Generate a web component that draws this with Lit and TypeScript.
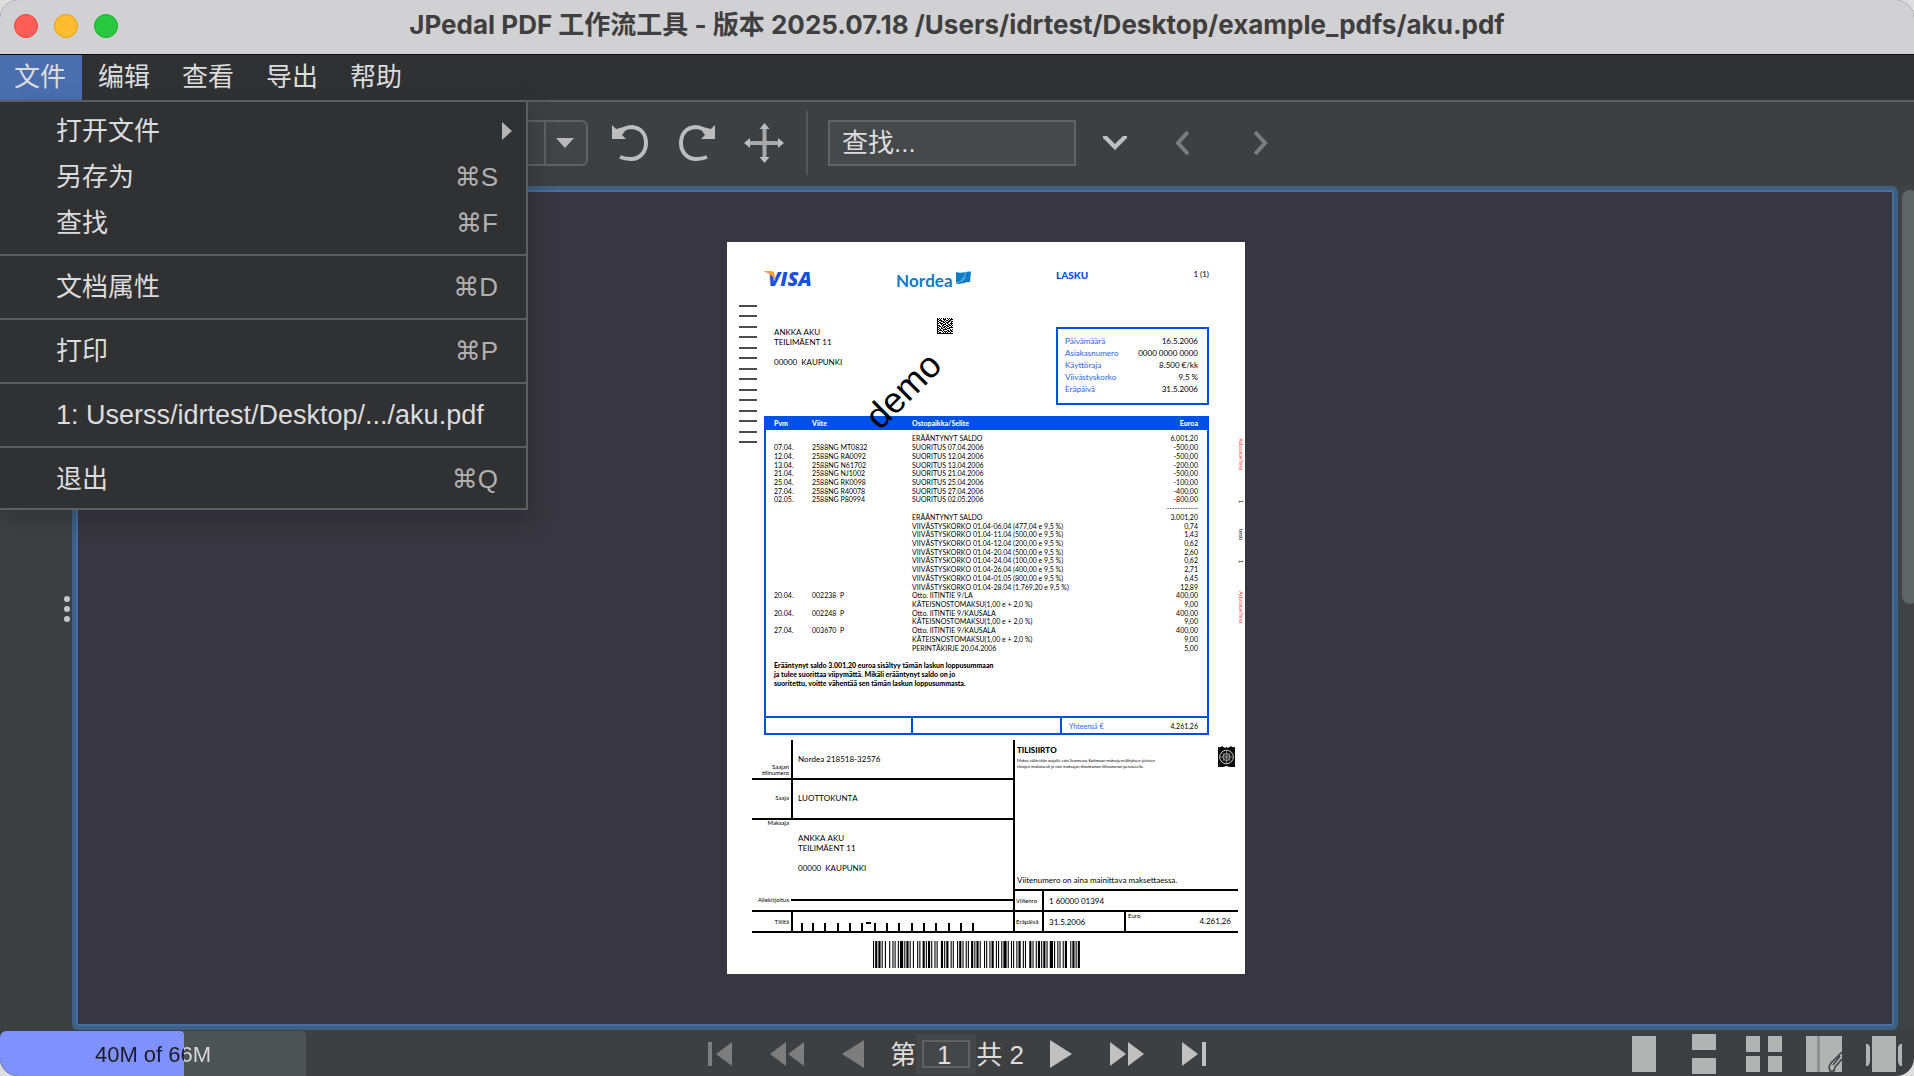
import { LitElement, html, svg, css } from "lit";
import { customElement } from "lit/decorators.js";

type Entry = { label: string; key?: string; sub?: boolean; path?: boolean };

const MENUS = ["文件", "编辑", "查看", "导出", "帮助"];

const FILE_MENU: Entry[][] = [
  [
    { label: "打开文件", sub: true },
    { label: "另存为", key: "⌘S" },
    { label: "查找", key: "⌘F" },
  ],
  [{ label: "文档属性", key: "⌘D" }],
  [{ label: "打印", key: "⌘P" }],
  [{ label: "1: Userss/idrtest/Desktop/.../aku.pdf", path: true }],
  [{ label: "退出", key: "⌘Q" }],
];

const ROWS: string[][] = [
  ["", "", "ERÄÄNTYNYT SALDO", "6.001,20"],
  ["07.04.", "2588NG MT0832", "SUORITUS 07.04.2006", "-500,00"],
  ["12.04.", "2588NG RA0092", "SUORITUS 12.04.2006", "-500,00"],
  ["13.04.", "2588NG N61702", "SUORITUS 13.04.2006", "-200,00"],
  ["21.04.", "2588NG NJ1002", "SUORITUS 21.04.2006", "-500,00"],
  ["25.04.", "2588NG RK0098", "SUORITUS 25.04.2006", "-100,00"],
  ["27.04.", "2588NG R40078", "SUORITUS 27.04.2006", "-400,00"],
  ["02.05.", "2588NG P80994", "SUORITUS 02.05.2006", "-800,00"],
  ["", "", "", "------------"],
  ["", "", "ERÄÄNTYNYT SALDO", "3.001,20"],
  ["", "", "VIIVÄSTYSKORKO 01.04-06.04 (477,04 e 9,5 %)", "0,74"],
  ["", "", "VIIVÄSTYSKORKO 01.04-11.04 (500,00 e 9,5 %)", "1,43"],
  ["", "", "VIIVÄSTYSKORKO 01.04-12.04 (200,00 e 9,5 %)", "0,62"],
  ["", "", "VIIVÄSTYSKORKO 01.04-20.04 (500,00 e 9,5 %)", "2,60"],
  ["", "", "VIIVÄSTYSKORKO 01.04-24.04 (100,00 e 9,5 %)", "0,62"],
  ["", "", "VIIVÄSTYSKORKO 01.04-26.04 (400,00 e 9,5 %)", "2,71"],
  ["", "", "VIIVÄSTYSKORKO 01.04-01.05 (800,00 e 9,5 %)", "6,45"],
  ["", "", "VIIVÄSTYSKORKO 01.04-28.04 (1.769,20 e 9,5 %)", "12,89"],
  ["20.04.", "002238  P", "Otto. IITINTIE 9/LA", "400,00"],
  ["", "", "KÄTEISNOSTOMAKSU(1,00 e + 2,0 %)", "9,00"],
  ["20.04.", "002248  P", "Otto. IITINTIE 9/KAUSALA", "400,00"],
  ["", "", "KÄTEISNOSTOMAKSU(1,00 e + 2,0 %)", "9,00"],
  ["27.04.", "003670  P", "Otto. IITINTIE 9/KAUSALA", "400,00"],
  ["", "", "KÄTEISNOSTOMAKSU(1,00 e + 2,0 %)", "9,00"],
  ["", "", "PERINTÄKIRJE 20.04.2006", "5,00"],
];

const SUMMARY: string[][] = [
  ["Päivämäärä", "16.5.2006"],
  ["Asiakasnumero", "0000 0000 0000"],
  ["Käyttöraja", "8.500 €/kk"],
  ["Viivästyskorko", "9,5 %"],
  ["Eräpäivä", "31.5.2006"],
];

const MATRIX = [
  "1010101010101010", "1101001110010111", "1011100101101100", "1100111010011011",
  "1011001101110010", "1101110010100111", "1000101110011010", "1110011001101101",
  "1011010110110010", "1100101101001111", "1010110010111000", "1101001111000101",
  "1011101000110110", "1100010111011011", "1011001010100100", "1111111111111111",
];

const BARS =
  "1121211213121112113111211213111221112112111321112211131121121112211121131112112211121131121112112211132112112111211231121112112311211121";

/** Bars of the payment barcode; digits give alternating bar and gap widths. */
function barcode() {
  const total = [...BARS].reduce((n, c) => n + Number(c), 0);
  let x = 0;
  const bars = [...BARS].map((c, i) => {
    const w = Number(c);
    const r = i % 2 === 0 ? svg`<rect x=${x} width=${w} y="0" height="27" />` : null;
    x += w;
    return r;
  });
  return html`<svg class="barcode" viewBox="0 0 ${total} 27" preserveAspectRatio="none" aria-hidden="true">${bars}</svg>`;
}

function matrix() {
  return html`<svg class="matrix" viewBox="0 0 16 16" shape-rendering="crispEdges" aria-hidden="true">
    ${MATRIX.map((row, y) =>
      [...row].map((c, x) => (c === "1" ? svg`<rect x=${x} y=${y} width="1" height="1" />` : null))
    )}
  </svg>`;
}

@customElement("pdf-page")
export class PdfPage extends LitElement {
  static styles = css`
    :host {
      display: block;
      position: relative;
      box-sizing: border-box;
      width: 518px;
      padding: 28px 0 6px;
      background: #fff;
      color: #000;
      font: 7px/9px Lato, "Noto Sans", sans-serif;
      font-kerning: none;
    }
    p, h1, h2, dl, dd, dt { margin: 0; font-size: inherit; font-weight: inherit; }
    .overlay { position: absolute; inset: 0; width: 100%; height: 100%; pointer-events: none; }
    .body { margin: 0 36px 0 37px; }
    .head { display: grid; grid-template-columns: 132px 160px 1fr auto; align-items: start; height: 48px; }
    .head svg { display: block; overflow: visible; }
    .lasku { font-size: 10px; line-height: 10px; font-weight: 900; color: #0050e6; }
    .count { font-size: 8px; line-height: 8px; }
    .top { display: grid; grid-template-columns: 173px 119px 1fr; align-items: start; }
    .address { font-size: 8px; line-height: 10px; white-space: pre; }
    .top .address { padding: 9px 0 0 10px; }
    .matrix { width: 16px; height: 16px; }
    .summary {
      display: grid; grid-template-columns: auto auto; margin-top: 9px; padding: 6px 9px 8px 7px;
      border: 2px solid #0050e6; line-height: 12px; height: 60px; font-size: 8px;
    }
    .summary dt { color: #1f62ea; }
    .summary dd { text-align: right; }
    .statement { margin-top: 11px; border: 2px solid #0050e6; border-top: 0; }
    table { width: 100%; height: 236px; border-collapse: collapse; table-layout: fixed; }
    th { background: #0050e6; color: #fff; text-align: left; font-weight: 900; height: 14px; padding: 0; }
    td { padding: 0; white-space: pre; line-height: 8px; vertical-align: middle; }
    .pad td { height: 4px; }
    .c0 { width: 46px; padding-left: 8px; box-sizing: border-box; }
    .c1 { width: 100px; }
    .c3 { width: 60px; text-align: right; padding-right: 9px; box-sizing: border-box; }
    .note { font-weight: 900; padding: 9px 8px 28px; width: 240px; white-space: pre; }
    .total { display: grid; grid-template-columns: 145px 149px 1fr; border-top: 2px solid #0050e6; height: 15px; }
    .total div + div { border-left: 2px solid #0050e6; }
    .sum { display: flex; justify-content: space-between; align-items: center; padding: 2px 9px 0 7px; }
    .sum span:first-child { color: #1f62ea; }
    .slip { display: grid; grid-template-columns: 263px 1fr; margin: 5px 7px 0 25px; }
    .left, .right { display: flex; flex-direction: column; }
    .left { border-right: 2px solid #000; box-sizing: border-box; }
    .line { display: grid; grid-template-columns: 39px 1fr; border-bottom: 2px solid #000; }
    .label { font-size: 6px; line-height: 6px; text-align: right; padding-right: 2px; align-self: center; }
    .value { font-size: 8px; line-height: 10px; display: flex; align-items: center; padding-left: 5px; border-left: 2px solid #000; }
    .r1 { height: 38px; }
    .r1 .label { align-self: end; padding-bottom: 2px; }
    .r2 { height: 38px; }
    .r2 .value, .r2 .label { padding-bottom: 2px; }
    .r3 { height: 90px; border-bottom: 2px solid #000; display: grid; grid-template-rows: 70px 20px; }
    .payer { display: grid; grid-template-columns: 39px 1fr; }
    .payer .label { align-self: start; }
    .payer .address { padding: 13px 0 0 7px; }
    .sign { display: grid; grid-template-columns: 39px 1fr; align-items: center; }
    .sign i { border-top: 2px solid #000; }
    .r4 { height: 19px; }
    .r4 svg { display: block; }
    .r4 .value { padding-left: 0; align-items: end; }
    .info { height: 151px; border-bottom: 2px solid #000; display: flex; flex-direction: column; justify-content: space-between; padding: 5px 0 4px 2px; box-sizing: border-box; }
    .info header { display: flex; justify-content: space-between; padding-right: 3px; }
    .info h2 { font-size: 8px; line-height: 10px; font-weight: 900; }
    .terms { font-size: 4px; line-height: 6px; margin-top: 3px; white-space: pre; }
    .remark { font-size: 8px; line-height: 10px; }
    .cells { display: flex; height: 19px; border-bottom: 2px solid #000; align-items: stretch; }
    .cells .label { width: 27px; text-align: left; padding-left: 1px; box-sizing: border-box; }
    .cells .value { flex: 1; }
    .due .value:nth-child(2) { flex: 0 0 75px; }
    .euro { flex: 1; display: flex; justify-content: space-between; border-left: 2px solid #000; padding: 0 7px 0 2px; }
    .euro span { font-size: 6px; line-height: 6px; padding-top: 1px; }
    .euro b { font-size: 8px; font-weight: 400; align-self: center; }
    .barcode { display: block; width: 208px; height: 27px; margin: 8px 0 0 146px; }
    .side {
      position: absolute; top: 196px; right: 1px; writing-mode: vertical-rl;
      font: 6px/6px "Liberation Sans", Arial, sans-serif;
      display: grid; grid-template-columns: 62px 29px 31px 31px auto;
    }
    .red { color: #f33; }
  `;

  render() {
    return html`
      <svg class="overlay" viewBox="0 0 518 732" aria-hidden="true">
        ${Array.from({ length: 14 }, (_, i) => svg`<path d="M12 ${64 + Math.round(i * 10.46)}h18" stroke="#000" stroke-width="1.4" />`)}
      </svg>
      <div class="body">
        <div class="head">
          <svg width="60" height="20" viewBox="0 0 60 20" role="img" aria-label="Visa">
            <text x="4" y="16" font-family="Open Sans, sans-serif" font-weight="800" font-style="italic" font-size="20" fill="#1a50dc">VISA</text>
            <path d="M0 1h7c2 0 3 1 3.400 3l1.200 7C9 6 5 3 0 1.500z" fill="#f7a428" />
          </svg>
          <svg width="76" height="22" viewBox="0 0 76 22" role="img" aria-label="Nordea">
            <text x="0" y="17" font-family="Lato, sans-serif" font-weight="700" font-size="17" fill="#0f7ac6">Nordea</text>
            <path d="M60 2c6 2 9-1 15-.5L74 12c-5-.5-8 3-14 1.500z" fill="#0f7ac6" />
            <path d="M60 13c5-1 8-5 10-11M65 12l5-5" stroke="#8cc4ea" fill="none" stroke-width=".8" />
          </svg>
          <h1 class="lasku">LASKU</h1>
          <span class="count">1 (1)</span>
        </div>
        <div class="top">
          <p class="address">${"ANKKA AKU\nTEILIMÄENT 11\n\n00000  KAUPUNKI"}</p>
          ${matrix()}
          <dl class="summary">${SUMMARY.map(([k, v]) => html`<dt>${k}</dt><dd>${v}</dd>`)}</dl>
        </div>
        <div class="statement">
          <table>
            <thead>
              <tr><th class="c0">Pvm</th><th class="c1">Viite</th><th>Ostopaikka/Selite</th><th class="c3">Euroa</th></tr>
            </thead>
            <tbody>
              <tr class="pad"><td colspan="4"></td></tr>
              ${ROWS.map((r) => html`<tr>${r.map((c, i) => html`<td class="c${i}">${c}</td>`)}</tr>`)}
            </tbody>
          </table>
          <p class="note">${"Erääntynyt saldo 3.001,20 euroa sisältyy tämän laskun loppusummaan\nja tulee suorittaa viipymättä. Mikäli erääntynyt saldo on jo\nsuoritettu, voitte vähentää sen tämän laskun loppusummasta."}</p>
          <div class="total"><div></div><div></div><div class="sum"><span>Yhteensä €</span><span>4.261,26</span></div></div>
        </div>
      </div>
      <div class="slip">
        <div class="left">
          <div class="line r1"><span class="label">Saajan<br />tilinumero</span><span class="value">Nordea 218518-32576</span></div>
          <div class="line r2"><span class="label">Saaja</span><span class="value">LUOTTOKUNTA</span></div>
          <div class="r3">
            <div class="payer"><span class="label">Maksaja</span><p class="address">${"ANKKA AKU\nTEILIMÄENT 11\n\n00000  KAUPUNKI"}</p></div>
            <div class="sign"><span class="label">Allekirjoitus</span><i></i></div>
          </div>
          <div class="line r4">
            <span class="label">Tililtä</span>
            <span class="value"><svg width="200" height="9" viewBox="0 0 200 9" aria-hidden="true">
              ${[9, 20, 32, 45, 57, 69, 82, 94, 106, 119, 131, 143, 156, 168, 180].map((x) => svg`<path d="M${x} 1v8" stroke="#000" stroke-width="2" />`)}
              <path d="M73 1h5" stroke="#000" stroke-width="2" />
            </svg></span>
          </div>
        </div>
        <div class="right">
          <div class="info">
            <header>
              <div>
                <h2>TILISIIRTO</h2>
                <p class="terms">${"Maksu välitetään saajalle vain Suomessa Kotimaan maksujenvälityksen yleisten\nehtojen mukaisesti ja vain maksajan ilmoittaman tilinumeron perusteella."}</p>
              </div>
              <svg width="17" height="23" viewBox="0 0 17 23" aria-hidden="true">
                <path d="M0 2q2 1 4-1 3 3 4.500 1Q10 4 13 1q2 2 4 1v20h-5l-3.500-1L5 22H0z" fill="#0a0a0a" />
                <circle cx="8.500" cy="12" r="6.800" fill="none" stroke="#ccc" stroke-width="1" />
                <circle cx="8.500" cy="12" r="3.500" fill="none" stroke="#aaa" stroke-width="1" />
                <path d="M8.500 6v12M2.500 12h12M4.500 8l8 8M12.500 8l-8 8" stroke="#999" stroke-width=".8" />
              </svg>
            </header>
            <p class="remark">Viitenumero on aina mainittava maksettaessa.</p>
          </div>
          <div class="cells"><span class="label">Viitenro</span><span class="value">1 60000 01394</span></div>
          <div class="cells due"><span class="label">Eräpäivä</span><span class="value">31.5.2006</span><div class="euro"><span>Euro</span><b>4.261,26</b></div></div>
        </div>
      </div>
      ${barcode()}
      <div class="side"><span class="red">AdvoiceTest</span><span>1</span><span>testi</span><span>1</span><span class="red">AdvoiceTest</span></div>
      <svg class="overlay" viewBox="0 0 518 732">
        <text transform="translate(153 189) rotate(-45)" font-family="Liberation Sans, Arial, sans-serif" font-size="36" fill="#000">demo</text>
      </svg>
    `;
  }
}

@customElement("app-root")
export class AppRoot extends LitElement {
  static styles = css`
    :host { display: block; background: #dededf; }
    * { box-sizing: border-box; }
    button { border: 0; background: none; padding: 0; margin: 0; font: inherit; color: inherit; display: flex; align-items: center; justify-content: center; }
    svg { display: block; }
    .window {
      display: flex; flex-direction: column; min-height: 100vh; border-radius: 18px; overflow: hidden;
      background: #3d3f41; color: #dcdcdc;
      font: 26px/46px "Liberation Sans", "Noto Sans CJK SC", Arial, sans-serif;
    }
    .titlebar { display: grid; grid-template-columns: 1fr auto 1fr; align-items: center; height: 55px; background: #d1d1d3; border-bottom: 1px solid #0c0c0d; padding: 0 14px; }
    .lights { display: flex; gap: 16px; margin-top: -2px; }
    .light { width: 24px; height: 24px; border-radius: 50%; border: 1px solid #e2463f; background: #ff5f57; }
    .min { background: #febc2e; border-color: #e1a116; }
    .max { background: #28c840; border-color: #1daa2d; }
    .title { margin: 0; padding-bottom: 4px; font: 700 26px/50px Inter, "Noto Sans CJK SC", sans-serif; color: #3f3f40; }
    .menubar { position: relative; z-index: 2; display: flex; gap: 2px; height: 47px; background: #303133; border-bottom: 2px solid #5c5e60; }
    .menubar > button { padding: 0 16px 0 14px; height: 45px; line-height: 44px; align-items: flex-start; }
    .menubar > .active { background: #4b6eaf; }
    .menu {
      position: absolute; left: 0; top: 45px; width: 528px; margin: 0; padding: 6px 0;
      background: #303133; border: 2px solid #5c5e60; border-left: 0; box-shadow: 4px 10px 24px rgba(0, 0, 0, .2);
    }
    .entry { width: 100%; height: 46px; line-height: 46px; justify-content: space-between; padding: 0 28px 0 56px; }
    .entry .label { white-space: nowrap; }
    .entry .path { font-size: 27px; }
    .key { color: #b0b0b0; font-family: "Liberation Sans", "DejaVu Sans", sans-serif; }
    .sub { margin-right: -14px; }
    hr { height: 2px; margin: 8px 0; border: 0; background: #5c5e60; }
    .toolbar { display: flex; align-items: center; height: 84px; padding: 0 0 2px 408px; }
    .combo { display: flex; width: 180px; height: 46px; border: 2px solid #5f6163; border-radius: 6px; background: #414547; align-items: center; }
    .combo select { appearance: none; flex: 1; height: 42px; border: 0; border-right: 2px solid #5f6163; background: none; color: inherit; font: inherit; padding-left: 12px; }
    .combo svg { margin: 0 12px 0 10px; }
    .tool { width: 67px; height: 46px; }
    .combo + .tool { margin-left: 8px; }
    .rule { width: 2px; height: 64px; margin: 0 20px 0 9px; background: #55585a; }
    .search { width: 248px; height: 46px; padding: 0 12px; border: 2px solid #626466; background: #45494b; color: #dcdcdc; font: inherit; line-height: 42px; outline: 0; border-radius: 0; }
    .search::placeholder { color: #dcdcdc; opacity: 1; }
    .search + .tool { margin-left: 5px; }
    .next { margin-left: 12px; }
    .work { flex: 1; display: flex; }
    .rail { width: 72px; display: flex; align-items: center; justify-content: flex-end; padding: 2px 2px 0 0; }
    .grip { display: grid; gap: 4px; }
    .grip i { width: 6px; height: 6px; border-radius: 50%; background: #c8c8c8; }
    .viewer {
      flex: 1; display: flex; align-items: center; justify-content: center; padding: 50px 0 50px 2px;
      background: #383741; border: 4px solid #3d6185; border-radius: 6px; box-shadow: inset 0 0 0 2px #466d9f;
    }
    .scroll { width: 16px; padding: 4px 0 0 4px; overflow: hidden; background: #3f4345; }
    .thumb { width: 16px; height: 414px; border-radius: 8px; background: #5d6567; }
    .status { display: grid; grid-template-columns: 1fr auto 1fr; align-items: center; height: 46px; }
    .memory { width: 306px; height: 46px; border-radius: 6px 4px 0 0; background: #4e5455; overflow: hidden; display: grid; font-size: 22px; line-height: 48px; text-align: center; }
    .memory > * { grid-area: 1 / 1; }
    .fill { background: #7f90ff; border-radius: 6px 4px 0 0; }
    .amount { color: transparent; background-clip: text; -webkit-background-clip: text; }
    .nav { display: flex; align-items: center; color: #dcdcdc; white-space: pre; }
    .nav button { height: 40px; }
    .nav label, .nav span { padding-top: 2px; }
    .nav .wide { margin: 0 38px; }
    .before { margin-right: 26px; }
    .after { margin-left: 26px; }
    .off { color: #7d7d7d; }
    .on { color: #c0c0c0; }
    .nav .pagebox { width: 60px; height: 40px; padding: 6px; background: #43474a; display: flex; }
    .pagebox input { width: 100%; height: 28px; padding: 2px 4px 0 0; border: 2px solid #5f6163; border-radius: 0; background: #43474a; color: #dcdcdc; font: inherit; line-height: 22px; text-align: center; outline: 0; }
    .modes { display: flex; justify-content: flex-end; color: #b2b3b3; }
    .modes button { width: 60px; height: 46px; }
  `;

  private entry(e: Entry) {
    return html`<button class="entry" role="menuitem">
      <span class=${e.path ? "label path" : "label"}>${e.label}</span>
      ${e.key ? html`<span class="key">${e.key}</span>` : null}
      ${e.sub ? html`<svg class="sub" width="10" height="18" viewBox="0 0 10 18"><path d="M0 0l10 9-10 9z" fill="#b4b4b4" /></svg>` : null}
    </button>`;
  }

  render() {
    const used = 40;
    const cut = 184;
    return html`
      <div class="window">
        <header class="titlebar">
          <div class="lights">
            <button class="light" aria-label="关闭"></button>
            <button class="light min" aria-label="最小化"></button>
            <button class="light max" aria-label="缩放"></button>
          </div>
          <h1 class="title">JPedal PDF 工作流工具 - 版本 2025.07.18 /Users/idrtest/Desktop/example_pdfs/aku.pdf</h1>
        </header>

        <nav class="menubar">
          ${MENUS.map((m, i) => html`<button class=${i === 0 ? "active" : ""}>${m}</button>`)}
          <div class="menu" role="menu">
            ${FILE_MENU.map((group, i) => html`${i > 0 ? html`<hr />` : null}${group.map((e) => this.entry(e))}`)}
          </div>
        </nav>

        <div class="toolbar">
          <div class="combo">
            <select aria-label="缩放比例"><option></option></select>
            <svg width="18" height="10" viewBox="0 0 18 10"><path d="M0 0h18L9 10z" fill="#b8b8b8" /></svg>
          </div>
          <button class="tool" aria-label="向左旋转">
            <svg width="36" height="36" viewBox="0 0 36 36" fill="none">
              <path d="M8 8Q12 2 20 2C29 3 34 9 34 18S28 34 19 34Q13 34 8 32" stroke="#bdbdbd" stroke-width="4" />
              <path d="M0 0l4 4 8-2 1 4-3 4 4 4H0z" fill="#bdbdbd" />
            </svg>
          </button>
          <button class="tool" aria-label="向右旋转">
            <svg width="36" height="36" viewBox="0 0 36 36" fill="none">
              <path d="M28 8Q24 2 16 2C7 3 2 9 2 18S8 34 17 34Q23 34 28 32" stroke="#bdbdbd" stroke-width="4" />
              <path d="M36 0l-4 4-8-2-1 4 3 4-4 4h14z" fill="#bdbdbd" />
            </svg>
          </button>
          <button class="tool" aria-label="移动">
            <svg width="40" height="40" viewBox="0 0 40 40">
              <path d="M18.500 4h4v32h-4zM4 18h32v4H4z" fill="#a8a8a8" />
              <path d="M20.500 0l5 6h-10zM20.500 40l5-6h-10zM0 20l6-5v10zM40 20l-6-5v10z" fill="#bdbdbd" />
            </svg>
          </button>
          <span class="rule"></span>
          <input class="search" type="text" aria-label="查找" placeholder="查找..." />
          <button class="tool" aria-label="查找选项">
            <svg width="24" height="14" viewBox="0 0 24 14"><path d="M0 0h4l8 8 8-8h4v2L12 14 0 2z" fill="#c0c0c0" /></svg>
          </button>
          <button class="tool" aria-label="上一个">
            <svg width="14" height="24" viewBox="0 0 14 24"><path d="M13 1L3 12l10 11" fill="none" stroke="#7c7c7c" stroke-width="4" /></svg>
          </button>
          <button class="tool next" aria-label="下一个">
            <svg width="14" height="24" viewBox="0 0 14 24"><path d="M1 1l10 11L1 23" fill="none" stroke="#7c7c7c" stroke-width="4" /></svg>
          </button>
        </div>

        <main class="work">
          <aside class="rail"><div class="grip"><i></i><i></i><i></i></div></aside>
          <section class="viewer"><pdf-page></pdf-page></section>
          <div class="scroll"><div class="thumb"></div></div>
        </main>

        <footer class="status">
          <div class="memory" role="progressbar" aria-label="内存" aria-valuenow=${used} aria-valuemin="0" aria-valuemax="66">
            <div class="fill" style="width: ${cut}px"></div>
            <span class="amount" style="background-image: linear-gradient(90deg, #1c1c22 ${cut}px, #dcdcdc ${cut}px)">40M of 66M</span>
          </div>
          <div class="nav">
            <button class="off" aria-label="第一页"><svg width="24" height="24" viewBox="0 0 24 24" fill="currentColor"><path d="M0 0h4v24H0zM24 0v24L8 12z" /></svg></button>
            <button class="off wide" aria-label="后退"><svg width="34" height="24" viewBox="0 0 34 24" fill="currentColor"><path d="M16 0v24L0 12zM34 0v24L18 12z" /></svg></button>
            <button class="off before" aria-label="上一页"><svg width="22" height="28" viewBox="0 0 22 28" fill="currentColor"><path d="M22 0v28L0 14z" /></svg></button>
            <label for="page">第</label>
            <span class="pagebox"><input id="page" type="text" .value=${"1"} /></span>
            <span>共 2</span>
            <button class="on after" aria-label="下一页"><svg width="22" height="28" viewBox="0 0 22 28" fill="currentColor"><path d="M0 0v28l22-14z" /></svg></button>
            <button class="on wide" aria-label="前进"><svg width="34" height="24" viewBox="0 0 34 24" fill="currentColor"><path d="M0 0v24l16-12zM18 0v24l16-12z" /></svg></button>
            <button class="on" aria-label="最后一页"><svg width="24" height="24" viewBox="0 0 24 24" fill="currentColor"><path d="M20 0h4v24h-4zM0 0v24l16-12z" /></svg></button>
          </div>
          <div class="modes">
            <button aria-label="单页"><svg width="24" height="36" viewBox="0 0 24 36" fill="currentColor"><path d="M0 0h24v36H0z" /></svg></button>
            <button aria-label="连续"><svg width="24" height="40" viewBox="0 0 24 40" fill="currentColor"><path d="M0 0h24v16H0zM0 24h24v16H0z" /></svg></button>
            <button aria-label="连续双页"><svg width="36" height="36" viewBox="0 0 36 36" fill="currentColor"><path d="M0 0h14v16H0zM22 0h14v16H22zM0 20h14v16H0zM22 20h14v16H22z" /></svg></button>
            <button aria-label="双页"><svg width="36" height="36" viewBox="0 0 36 36" fill="currentColor">
              <path d="M0 0h36v36H0z" /><path d="M11 0h3v36h-3z" fill="#8f9090" />
              <path d="M36 16l-5 5-6 6-2 4 1 4h4l1-4 7-8M34 20l-7 9" fill="none" stroke="#3d3f41" stroke-width="1.500" />
            </svg></button>
            <button aria-label="翻页"><svg width="36" height="36" viewBox="0 0 36 36" fill="currentColor"><path d="M6 0h24v36H6zM0 8h2l2 3v15l-2 4H0zM36 8h-2l-2 3v15l2 4h2z" /></svg></button>
          </div>
        </footer>
      </div>
    `;
  }
}
